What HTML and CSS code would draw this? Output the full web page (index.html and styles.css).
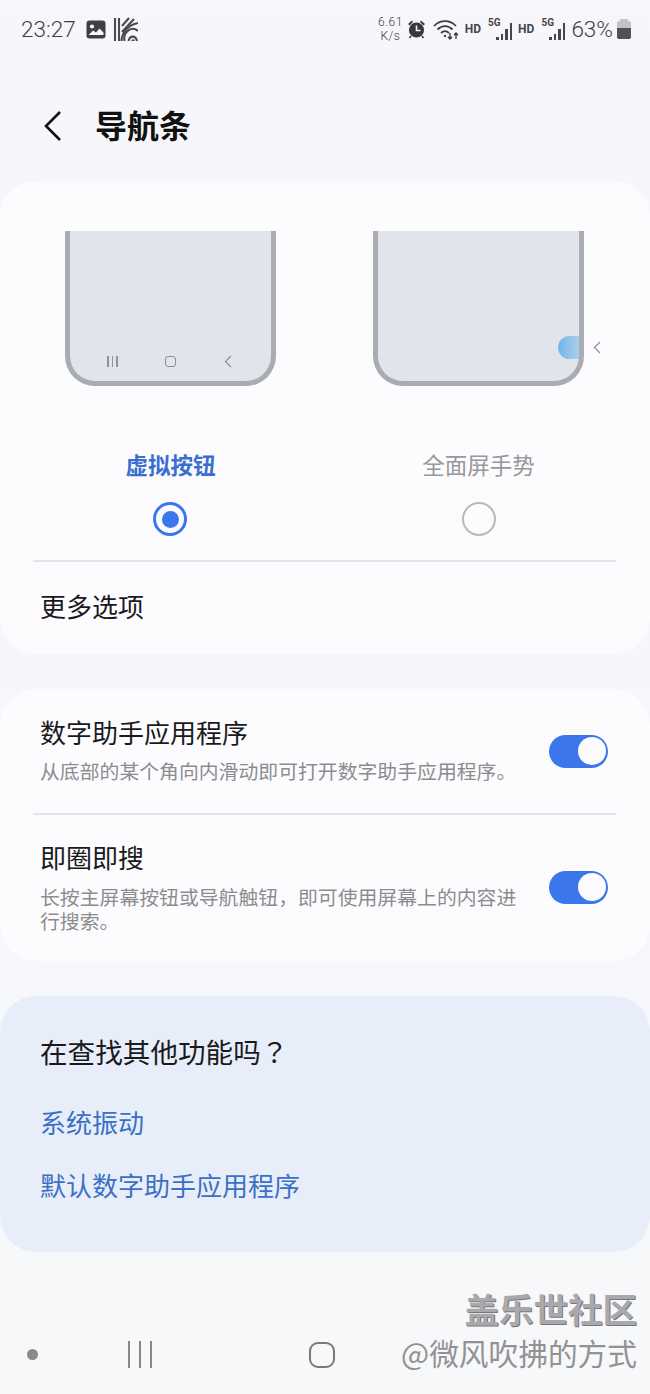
FILE: index.html
```html
<!DOCTYPE html>
<html lang="zh-CN">
<head>
    <meta charset="UTF-8">
    <meta name="viewport" content="width=device-width, initial-scale=1.0">
    <title>导航条</title>
    <link rel="stylesheet" href="styles.css">
</head>
<body>
    <div class="screen">
        <div class="status-bar">
            <div class="status-left">
                <span class="clock">23:27</span>
                <svg class="icon-gallery" width="20" height="19" viewBox="0 0 20 19">
                    <rect x="0.5" y="0.5" width="19" height="18" rx="3" fill="#3f3f42"/>
                    <circle cx="6" cy="6.5" r="2.1" fill="#f6f6fa"/>
                    <path d="M2.5 15 L7 10.5 L10 12.5 L13.5 8.5 L17.5 12.5 V15 Z" fill="#f6f6fa"/>
                </svg>
                <svg class="icon-brand" width="25" height="24" viewBox="0 0 25 24" fill="none" stroke="#4a4a4d" stroke-width="2.1">
                    <path d="M2 1 V24"/>
                    <path d="M6 1 V24"/>
                    <path d="M9 9 L16 1"/>
                    <path d="M9 15 L21 2"/>
                    <path d="M8.5 24 C9 15 15 8 25 6"/>
                    <path d="M11.5 24 A8.5 10 0 0 1 25 14"/>
                    <path d="M15.5 24 A4.5 6.5 0 0 1 24 24"/>
                    <path d="M19 24 A1.5 3 0 0 1 21 24"/>
                </svg>
            </div>
            <div class="status-right">
                <span class="speed">6.61<br>K/s</span>
                <svg class="icon-alarm" width="19" height="20" viewBox="0 0 19 20">
                    <circle cx="9.5" cy="11" r="7.6" fill="#38383b"/>
                    <path d="M1 5 L5 1.5 L6 3 L2.5 6.5 Z M18 5 L14 1.5 L13 3 L16.5 6.5 Z" fill="#38383b"/>
                    <path d="M9.5 6.5 V11.5 H13.5" stroke="#f6f6fa" stroke-width="1.6" fill="none"/>
                    <path d="M4 17 L2.5 19 M15 17 L16.5 19" stroke="#38383b" stroke-width="1.6"/>
                </svg>
                <svg class="icon-wifi" width="26" height="21" viewBox="0 0 26 21" fill="none" stroke="#3f3f42" stroke-width="1.8">
                    <path d="M1 7 C7 0.5 17 0.5 23 7"/>
                    <path d="M4.5 10.5 C9 6 15 6 19.5 10.5"/>
                    <path d="M8 14 C10.5 11.5 13.5 11.5 16 14"/>
                    <circle cx="12" cy="17" r="1.2" fill="#3f3f42" stroke="none"/>
                    <path d="M17 14 V20 M15 17.8 L17 20 L19 17.8" stroke-width="1.4"/>
                    <path d="M23 20 V14 M21 16.2 L23 14 L25 16.2" stroke-width="1.4"/>
                </svg>
                <span class="hd">HD</span>
                <span class="signal">
                    <span class="five-g">5G</span>
                    <span class="bars"><i class="b1"></i><i class="b2"></i><i class="b3"></i><i class="b4"></i></span>
                </span>
                <span class="hd">HD</span>
                <span class="signal">
                    <span class="five-g">5G</span>
                    <span class="bars"><i class="b1"></i><i class="b2"></i><i class="b3"></i><i class="b4"></i></span>
                </span>
                <span class="percent">63%</span>
                <span class="battery"><span class="battery-fill"></span></span>
            </div>
        </div>

        <div class="header">
            <svg class="back" width="19" height="32" viewBox="0 0 19 32" fill="none" stroke="#111" stroke-width="2.6">
                <path d="M17 2 L3 16 L17 30"/>
            </svg>
            <h1>导航条</h1>
        </div>

        <div class="card nav-card">
            <div class="modes">
                <div class="mode">
                    <div class="phone">
                        <div class="phone-keys">
                            <span class="key-lines"><i></i><i></i><i></i></span>
                            <span class="key-home"></span>
                            <svg width="8" height="13" viewBox="0 0 8 13" fill="none" stroke="#8b8e92" stroke-width="1.2"><path d="M7 1 L1.5 6.5 L7 12"/></svg>
                        </div>
                    </div>
                    <div class="mode-label active">虚拟按钮</div>
                    <div class="radio active"></div>
                </div>
                <div class="mode">
                    <div class="phone">
                        <div class="gesture-pill"></div>
                        <svg class="gesture-arrow" width="8" height="13" viewBox="0 0 8 13" fill="none" stroke="#8b8e92" stroke-width="1.2"><path d="M7 1 L1.5 6.5 L7 12"/></svg>
                    </div>
                    <div class="mode-label">全面屏手势</div>
                    <div class="radio"></div>
                </div>
            </div>
            <div class="row more-row">
                <div class="row-title">更多选项</div>
            </div>
        </div>

        <div class="card">
            <div class="row switch-row first">
                <div class="row-text">
                    <div class="row-title">数字助手应用程序</div>
                    <div class="row-sub">从底部的某个角向内滑动即可打开数字助手应用程序。</div>
                </div>
                <div class="toggle"></div>
            </div>
            <div class="row switch-row second">
                <div class="row-text">
                    <div class="row-title">即圈即搜</div>
                    <div class="row-sub">长按主屏幕按钮或导航触钮，即可使用屏幕上的内容进行搜索。</div>
                </div>
                <div class="toggle"></div>
            </div>
        </div>

        <div class="card suggest">
            <div class="suggest-title">在查找其他功能吗<span class="question" lang="zh-TW">？</span></div>
            <div class="suggest-link">系统振动</div>
            <div class="suggest-link">默认数字助手应用程序</div>
        </div>

        <div class="nav-bar">
            <span class="nav-dot"></span>
            <span class="nav-lines"><i></i><i></i><i></i></span>
            <span class="nav-home"></span>
        </div>

        <div class="watermark">
            <div class="wm-big">盖乐世社区</div>
            <div class="wm-small">@微风吹拂的方式</div>
        </div>
    </div>
</body>
</html>
```

FILE: styles.css
```css
html, body {
    margin: 0;
    padding: 0;
}
body {
    font-family: "Noto Sans CJK SC", "Noto Sans", sans-serif;
    background: #f6f6fa;
    color: #1a1a1c;
}
.screen {
    position: relative;
    width: 650px;
    height: 1394px;
    overflow: hidden;
    background: linear-gradient(to bottom, #f6f6fb, #f7f8fa);
}

/* status bar */
.status-bar {
    height: 58px;
    padding: 0 19px 0 21px;
    display: flex;
    justify-content: space-between;
    align-items: center;
    box-sizing: border-box;
}
.status-left, .status-right {
    display: flex;
    align-items: center;
}
.clock {
    font-family: Roboto, sans-serif;
    font-size: 22.5px;
    font-weight: 300;
    color: #3f3f42;
    margin-right: 10px;
}
.icon-gallery {
    margin-right: 7px;
}
.speed {
    font-family: Roboto, sans-serif;
    font-size: 12px;
    font-weight: 300;
    line-height: 14px;
    letter-spacing: 0.5px;
    color: #3f3f42;
    text-align: center;
    margin-right: 4px;
}
.icon-alarm {
    margin-right: 7px;
}
.icon-wifi {
    margin-right: 6px;
}
.hd {
    font-family: Roboto, sans-serif;
    font-size: 12px;
    font-weight: 700;
    color: #47474a;
    margin-right: 7px;
}
.signal {
    position: relative;
    display: block;
    width: 24px;
    height: 22px;
    margin-right: 6px;
}
.five-g {
    position: absolute;
    left: 0;
    top: 0;
    font-family: Roboto, sans-serif;
    font-size: 10px;
    line-height: 10px;
    font-weight: 700;
    color: #47474a;
}
.bars {
    position: absolute;
    right: 0;
    bottom: 0;
    display: flex;
    align-items: flex-end;
    gap: 2px;
}
.bars i {
    display: block;
    width: 2.5px;
    background: #47474a;
}
.bars .b1 { height: 3px; }
.bars .b2 { height: 6px; }
.bars .b3 { height: 11px; }
.bars .b4 { height: 17px; }
.percent {
    font-family: Roboto, sans-serif;
    font-size: 22.5px;
    font-weight: 300;
    color: #3f3f42;
    margin-right: 4px;
}
.battery {
    position: relative;
    display: block;
    width: 14px;
    height: 18px;
    margin-top: 2px;
    background: #c4c4c6;
    border-radius: 2px;
}
.battery:before {
    content: "";
    position: absolute;
    left: 3px;
    top: -2px;
    width: 8px;
    height: 2px;
    background: #c4c4c6;
}
.battery-fill {
    position: absolute;
    left: 0;
    right: 0;
    bottom: 0;
    height: 11px;
    background: #515154;
    border-radius: 0 0 2px 2px;
}

/* header */
.header {
    height: 123px;
    padding: 0 0 0 43px;
    display: flex;
    align-items: flex-start;
    box-sizing: border-box;
}
.back {
    margin-top: 52px;
}
.header h1 {
    margin: 45px 0 0 33px;
    font-size: 32px;
    line-height: 42px;
    font-weight: 700;
    color: #111;
}

/* cards */
.card {
    background: #fcfcff;
    border-radius: 36px;
    margin-bottom: 35px;
}
.nav-card {
    height: 473px;
    box-sizing: border-box;
    padding-top: 50px;
}
.modes {
    display: flex;
    height: 329px;
    padding: 0 0 0 65px;
    gap: 97px;
}
.mode {
    width: 211px;
    display: flex;
    flex-direction: column;
    align-items: center;
}
.phone {
    position: relative;
    width: 211px;
    height: 155px;
    box-sizing: border-box;
    background: #e1e4ea;
    border: 5px solid #a8acb3;
    border-top: 0;
    border-radius: 0 0 30px 30px;
}
.phone-keys {
    position: absolute;
    left: 37px;
    right: 39px;
    bottom: 13px;
    display: flex;
    justify-content: space-between;
    align-items: center;
}
.key-lines {
    display: flex;
    gap: 3px;
}
.key-lines i {
    display: block;
    width: 1.5px;
    height: 11px;
    background: #909397;
}
.key-home {
    display: block;
    width: 9px;
    height: 9px;
    border: 1.2px solid #8b8e92;
    border-radius: 3px;
}
.gesture-pill {
    position: absolute;
    right: 0;
    bottom: 22px;
    width: 21px;
    height: 23px;
    border-radius: 12px 0 0 12px;
    background: linear-gradient(to right, #72b5ee, #a9cfe9);
}
.gesture-arrow {
    position: absolute;
    right: -22px;
    bottom: 27px;
}
.mode-label {
    margin-top: 62px;
    font-size: 22.5px;
    line-height: 32px;
    color: #97989b;
}
.mode-label.active {
    color: #3a6fd0;
    font-weight: 700;
}
.radio {
    width: 34px;
    height: 34px;
    box-sizing: border-box;
    margin: 22px 0 0 0;
    border: 2.5px solid #b9b9bc;
    border-radius: 50%;
    display: flex;
    align-items: center;
    justify-content: center;
}
.radio.active {
    border: 3.5px solid #3b76ec;
    margin-right: 1px;
}
.radio.active:before {
    content: "";
    width: 17px;
    height: 17px;
    border-radius: 50%;
    background: #3b76ec;
}

/* rows */
.row {
    position: relative;
    padding: 0 40px;
}
.row-title {
    font-size: 26px;
    line-height: 36px;
    color: #1a1a1c;
}
.more-row {
    height: 94px;
    box-sizing: border-box;
    padding-top: 28px;
}
.more-row:before, .second:before {
    content: "";
    position: absolute;
    left: 33px;
    right: 34px;
    top: 0;
    height: 2px;
    background: #e4e4e8;
}
.switch-row {
    display: flex;
    justify-content: space-between;
    align-items: center;
    box-sizing: border-box;
    padding-right: 42px;
}
.first {
    height: 124px;
}
.second {
    height: 148px;
}
.row-text {
    align-self: flex-start;
    width: 482px;
    padding-top: 26px;
}
.first .row-text {
    padding-top: 25px;
}
.row-sub {
    font-size: 19.85px;
    line-height: 24px;
    margin-top: 10px;
    color: #8c8c90;
}
.first .row-sub {
    margin-top: 9px;
}
.toggle {
    position: relative;
    flex: none;
    width: 59px;
    height: 33px;
    border-radius: 17px;
    background: #3b76ec;
}
.toggle:after {
    content: "";
    position: absolute;
    right: 2px;
    top: 2.5px;
    width: 28px;
    height: 28px;
    border-radius: 50%;
    background: #fcfcff;
}

/* suggestion card */
.suggest {
    height: 256px;
    box-sizing: border-box;
    padding: 37px 40px 0;
    background: #e8eef9;
    margin-bottom: 0;
}
.suggest-title {
    font-size: 27.6px;
    line-height: 36px;
    color: #1a1a1c;
    margin-bottom: 35px;
}
.question {
    font-family: "Noto Sans CJK TC", sans-serif;
}
.suggest-link {
    font-size: 26px;
    line-height: 36px;
    color: #3a71c4;
    margin-bottom: 27px;
}

/* bottom nav */
.nav-bar {
    position: absolute;
    left: 0;
    right: 0;
    bottom: 26px;
    height: 27px;
    display: flex;
    align-items: center;
    padding-left: 27px;
}
.nav-dot {
    display: block;
    width: 11px;
    height: 11px;
    border-radius: 50%;
    background: #888a8c;
}
.nav-lines {
    display: flex;
    gap: 9px;
    margin-left: 90px;
}
.nav-lines i {
    display: block;
    width: 2px;
    height: 27px;
    background: #858789;
}
.nav-home {
    display: block;
    width: 26px;
    height: 26px;
    box-sizing: border-box;
    margin-left: 157px;
    border: 2px solid #77797b;
    border-radius: 9px;
}

/* watermark sits over the nav bar */
.watermark {
    position: absolute;
    right: 13px;
    top: 1286px;
    text-align: right;
    color: #8f8f92;
}
.wm-big {
    font-size: 34.5px;
    line-height: 44px;
    font-weight: 700;
    color: #a9a9ac;
    text-shadow: 1px 1px 0 #77777a;
}
.wm-small {
    font-size: 29.7px;
    line-height: 42px;
    margin-top: 2px;
    color: #929295;
}
```
